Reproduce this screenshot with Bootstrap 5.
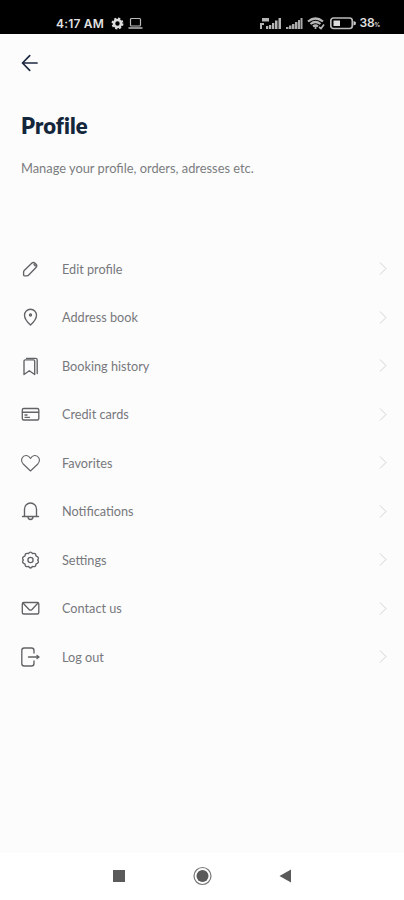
<!DOCTYPE html>
<html lang="en">
<head>
<meta charset="utf-8">
<meta name="viewport" content="width=device-width, initial-scale=1">
<title>Profile</title>
<link href="https://cdn.jsdelivr.net/npm/bootstrap@5.3.0/dist/css/bootstrap.min.css" rel="stylesheet">
<style>
body{font-family:Lato,"Open Sans",sans-serif;background:#fcfcfc;height:900px;overflow:hidden}
svg{display:block;flex:none}
.statusbar{height:34px;background:#000;color:#e2e2e2;padding:13px 24px 0 56px;font:600 12px/20px Inter,sans-serif}
.clock{letter-spacing:.2px;width:49px;margin-right:6px;white-space:nowrap}
.percent{font-size:12px;letter-spacing:-.3px}
.percent small{font-size:6px}
.topbar{height:58px;padding-left:21px}
.heading{height:67px;padding-left:21px;color:#14263b;font-size:22px;font-weight:800;line-height:67px;letter-spacing:.1px}
.intro{height:85.7px;padding:0 0 0 21px;line-height:18px;font-size:12.85px;color:#7b7c80}
.entry{height:48.5px;padding:0 17px 0 20px;color:#77787c;background:transparent;font-size:12.7px;border:0}
.entry .glyph{width:21px;height:22px;margin-right:21px;fill:none;stroke:#626366;stroke-width:1.35;stroke-linecap:round;stroke-linejoin:round}
.entry span{padding-top:1px}
.chevron{fill:none;stroke:#d3d3d3;stroke-width:1}
.softkeys{height:47px;background:#fff;padding-bottom:1px}
</style>
<script src="https://cdn.jsdelivr.net/npm/bootstrap@5.3.0/dist/js/bootstrap.bundle.min.js"></script>
</head>
<body class="d-flex flex-column">
<header class="statusbar d-flex align-items-center">
  <span class="clock">4:17 AM</span>
  <svg width="13" height="13" viewBox="0 0 13 13"><circle cx="6.5" cy="6.5" r="3.5" fill="none" stroke="#ddd" stroke-width="2.6"/><circle cx="6.5" cy="6.5" r="5.1" fill="none" stroke="#ddd" stroke-width="1.8" stroke-dasharray="2.2 1.8"/></svg>
  <svg class="ms-1" width="15" height="13" viewBox="0 0 15 13" fill="none" stroke="#bbb"><rect x="2.5" y="1.5" width="10" height="7.5" rx="1" stroke-width="1.2"/><path d="M.5 11h14" stroke-width="1.5"/></svg>
  <div class="ms-auto d-flex align-items-center">
    <svg width="22" height="13" viewBox="0 0 22 13" fill="#b5b5b5"><path d="M2 1h7v3.500H2zM0 6h4v2H2v4H0zM6 9h2.300v3H6zM9 8h2.300v4H9zM12 6h2.300v6H12zM15 3.500h2.500V12H15zM18.500 1h2.500v11h-2.500z"/></svg>
    <svg class="ms-1" width="17" height="13" viewBox="0 0 17 13" fill="#aaa"><path d="M0 10h2.500v2H0zM3 8.500h2.500V12H3zM6 7h2.500v5H6zM9 5h2.500v7H9zM12 3h2v9h-2zM14.500 1h2v11h-2z"/></svg>
    <svg class="ms-1" width="19" height="13" viewBox="0 0 19 13" fill="none" stroke="#b8b8b8" stroke-width="2.200"><path d="M1 4.500q7.500-6 15 0M3.500 7q5-4 10 0M6 9.500q2.500-2 5 0"/><path d="M8.500 9.500v2.500M12 10l2 1.500 3-4" stroke-width="1.700"/></svg>
    <svg class="ms-1" width="26" height="13" viewBox="0 0 26 13"><rect x=".8" y="1" width="21.500" height="10.500" rx="2.700" fill="none" stroke="#bbb" stroke-width="1.700"/><path d="M3.500 3.500h6.500v5.500H3.500z" fill="#ddd"/><path d="M23.500 4l2.300 1v2.500l-2.300 1z" fill="#ccc"/></svg>
    <span class="percent ms-1">38<small>%</small></span>
  </div>
</header>
<nav class="topbar d-flex align-items-center">
  <svg width="18" height="18" viewBox="0 0 18 18" fill="none" stroke="#1c2940" stroke-width="1.7" stroke-linecap="round" stroke-linejoin="round"><path d="M16 9H1.500M8.700 1.700L1.500 9l7.200 7.300"/></svg>
</nav>
<h1 class="heading m-0">Profile</h1>
<p class="intro m-0">Manage your profile, orders, adresses etc.</p>
<main class="list-group list-group-flush">
  <a class="entry list-group-item d-flex align-items-center" href="#"><svg class="glyph" viewBox="0 0 21 22"><path d="M4.200 12.500l7.500-7.300q1.500-1.400 3.500.200l.7.700q1.700 1.700.1 3.400L8.700 17q-.8.800-1.900.8H4.300q-.7 0-.7-.7v-2.700q0-1.200.6-1.900zM14 6.500l1.200 1.300"/></svg><span>Edit profile</span><svg class="chevron ms-auto" width="8" height="13" viewBox="0 0 8 13"><path d="M1 .5l6 6-6 6"/></svg></a>
  <a class="entry list-group-item d-flex align-items-center" href="#"><svg class="glyph" viewBox="0 0 21 22"><path d="M10.500 19q-6-5.500-6-9.800a6 6 0 0 1 12 0q0 4.300-6 9.800z"/><circle cx="10.500" cy="9" r="1"/></svg><span>Address book</span><svg class="chevron ms-auto" width="8" height="13" viewBox="0 0 8 13"><path d="M1 .5l6 6-6 6"/></svg></a>
  <a class="entry list-group-item d-flex align-items-center" href="#"><svg class="glyph" viewBox="0 0 21 22"><path d="M4 6q0-1.200 1.200-1.200h8.300q1.200 0 1.200 1.200v13.500L9.300 15.700 4 19.500zM6.500 3.300h9q1.700 0 1.700 1.700v13.500"/></svg><span>Booking history</span><svg class="chevron ms-auto" width="8" height="13" viewBox="0 0 8 13"><path d="M1 .5l6 6-6 6"/></svg></a>
  <a class="entry list-group-item d-flex align-items-center" href="#"><svg class="glyph" viewBox="0 0 21 22"><rect x="2.300" y="5.500" width="16.500" height="11.500" rx="1.500"/><path d="M2.500 9.200h16M5 12h2M5 14.300h4.500"/></svg><span>Credit cards</span><svg class="chevron ms-auto" width="8" height="13" viewBox="0 0 8 13"><path d="M1 .5l6 6-6 6"/></svg></a>
  <a class="entry list-group-item d-flex align-items-center" href="#"><svg class="glyph" viewBox="0 0 21 22"><path d="M10.500 19L3.200 12C-.5 7.500 3 3.200 6.500 3.500q2.500.200 4 3 1.500-2.800 4-3c3.500-.300 7 4 3.300 8.500z" stroke-width="1.100"/></svg><span>Favorites</span><svg class="chevron ms-auto" width="8" height="13" viewBox="0 0 8 13"><path d="M1 .5l6 6-6 6"/></svg></a>
  <a class="entry list-group-item d-flex align-items-center" href="#"><svg class="glyph" viewBox="0 0 21 22"><path d="M2.500 16.500h16M4.500 16.300V9a6 6 0 0 1 12 0v7.300M8 16.800q0 2.700 2.500 2.700t2.500-2.700"/></svg><span>Notifications</span><svg class="chevron ms-auto" width="8" height="13" viewBox="0 0 8 13"><path d="M1 .5l6 6-6 6"/></svg></a>
  <a class="entry list-group-item d-flex align-items-center" href="#"><svg class="glyph" viewBox="0 0 21 22"><path d="M8.500 4.500Q10.500 1.600 12.500 4.500 16 3.600 15.900 6.800 20 8.500 17.600 11 20 13.500 15.900 15.200 16 18.400 12.500 17.500 10.500 20.400 8.500 17.500 5 18.400 5.100 15.200 1 13.500 3.400 11 1 8.500 5.100 6.800 5 3.600 8.500 4.500z"/><circle cx="10.500" cy="11" r="2.600"/></svg><span>Settings</span><svg class="chevron ms-auto" width="8" height="13" viewBox="0 0 8 13"><path d="M1 .5l6 6-6 6"/></svg></a>
  <a class="entry list-group-item d-flex align-items-center" href="#"><svg class="glyph" viewBox="0 0 21 22"><rect x="2.300" y="5.500" width="16.500" height="11.500" rx="1.500"/><path d="M3 6l6 6.500q1.500 1.300 3 0l6-6.500"/></svg><span>Contact us</span><svg class="chevron ms-auto" width="8" height="13" viewBox="0 0 8 13"><path d="M1 .5l6 6-6 6"/></svg></a>
  <a class="entry list-group-item d-flex align-items-center" href="#"><svg class="glyph" viewBox="0 0 21 22"><path d="M14 7V4.500q0-2.500-2.500-2.500H4.200Q1.800 2 1.800 4.500v13Q1.800 20 4.200 20h7.300q2.500 0 2.500-2.500V15M8.500 11H19M17 9.500l2 1.500-2 1.500"/></svg><span>Log out</span><svg class="chevron ms-auto" width="8" height="13" viewBox="0 0 8 13"><path d="M1 .5l6 6-6 6"/></svg></a>
</main>
<footer class="softkeys mt-auto d-flex justify-content-center align-items-center">
  <svg width="188" height="20" viewBox="0 0 188 20" fill="#5a5a5a"><path d="M5 4h12v12H5z"/><circle cx="94.500" cy="10" r="8.500" fill="none" stroke="#777" stroke-width="1.200"/><circle cx="94.500" cy="10" r="6"/><path d="M171.500 10L183 3.500v13z"/></svg>
</footer>
</body>
</html>
